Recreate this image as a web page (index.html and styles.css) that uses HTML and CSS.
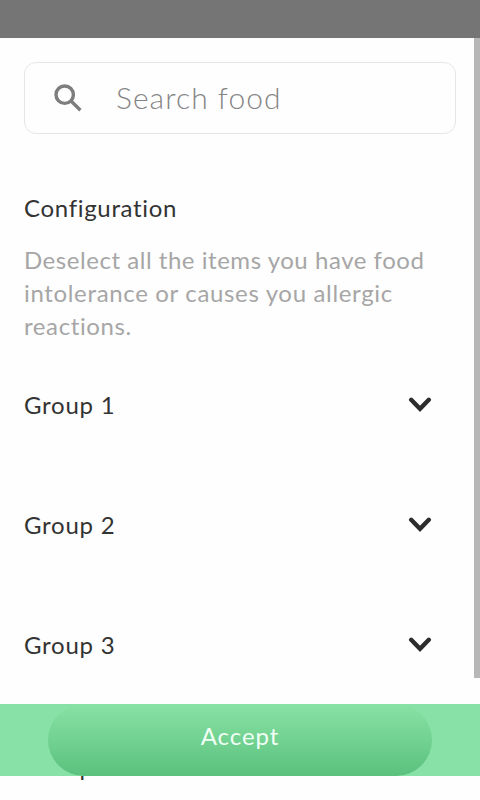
FILE: index.html
```html
<!DOCTYPE html>
<html lang="en">
<head>
<meta charset="utf-8">
<title>Configuration</title>
<link rel="stylesheet" href="styles.css">
</head>
<body>
<div class="status-bar"></div>
<main class="content">
  <div class="search">
    <svg class="search-icon" viewBox="0 0 28 28"><circle cx="10.7" cy="10.7" r="8.7"/><path d="M16.8 16.8L26.4 26.3"/></svg>
    <span class="search-text">Search food</span>
  </div>
  <h1 class="title">Configuration</h1>
  <p class="description"><span class="line line-a">Deselect all the items you have food</span> <span class="line line-b">intolerance or causes you allergic</span> <span class="line line-c">reactions.</span></p>
  <ul class="groups">
    <li class="group"><span>Group 1</span><svg class="chevron" viewBox="0 0 24 16"><path d="M3.2 2.8L12 11.8L20.8 2.8"/></svg></li>
    <li class="group"><span>Group 2</span><svg class="chevron" viewBox="0 0 24 16"><path d="M3.2 2.8L12 11.8L20.8 2.8"/></svg></li>
    <li class="group"><span>Group 3</span><svg class="chevron" viewBox="0 0 24 16"><path d="M3.2 2.8L12 11.8L20.8 2.8"/></svg></li>
    <li class="group"><span>Group 4</span></li>
  </ul>
</main>
<div class="scrollbar"></div>
<footer class="footer"><button class="accept">Accept</button></footer>
</body>
</html>
```
FILE: styles.css
```css
* { box-sizing: border-box; }
body {
  position: relative;
  width: 480px;
  height: 800px;
  margin: 0;
  overflow: hidden;
  background: #fefefe;
  color: #333;
  font-family: Lato, sans-serif;
  font-size: 24px;
}
.status-bar { height: 38px; background: #757575; }
.content { padding: 24px 24px 0; }
.search {
  display: flex;
  align-items: center;
  height: 72px;
  padding-left: 29px;
  border: 1px solid #e6e6e6;
  border-radius: 12px;
}
.search-icon {
  width: 28px;
  height: 28px;
  fill: none;
  stroke: #7d7d7d;
  stroke-width: 3.4;
}
.search-text {
  margin-left: 34px;
  padding-bottom: 2px;
  color: #858585;
  font-size: 30px;
  font-weight: 300;
  letter-spacing: 1.03px;
  white-space: nowrap;
}
.title {
  margin: 57px 0 0;
  font-size: 24px;
  font-weight: 400;
  line-height: 33px;
  letter-spacing: 0.68px;
}
.description {
  margin: 19px 0 0;
  color: #a6a6a6;
  font-weight: 400;
  line-height: 33px;
}
.line { display: block; white-space: nowrap; }
.line-a { letter-spacing: 0.54px; }
.line-b { letter-spacing: 0.66px; }
.line-c { letter-spacing: 0.6px; }
.groups { margin: 3px 0 0; padding: 0; list-style: none; }
.group {
  display: flex;
  align-items: center;
  justify-content: space-between;
  height: 120px;
  padding-right: 24px;
  letter-spacing: 0.75px;
}
.group span { padding-bottom: 2px; }
.group:last-child span { padding: 2px 0 0; }
.chevron {
  width: 24px;
  height: 16px;
  fill: none;
  stroke: #2d2d2d;
  stroke-width: 4.4;
  stroke-linecap: round;
}
.scrollbar {
  position: absolute;
  top: 38px;
  right: 0;
  width: 6px;
  height: 640px;
  background: #b7b7b7;
}
.footer {
  position: absolute;
  top: 704px;
  left: 0;
  width: 100%;
  height: 72px;
  padding: 0 48px;
  background: #88e2a8;
}
.accept {
  display: block;
  width: 100%;
  height: 72px;
  padding: 0 0 9px;
  border: 0;
  border-radius: 36px;
  background: linear-gradient(#88e2a5, #5bc17d);
  color: #f0fff5;
  font: 24px Lato, sans-serif;
  letter-spacing: 0.9px;
}
```
